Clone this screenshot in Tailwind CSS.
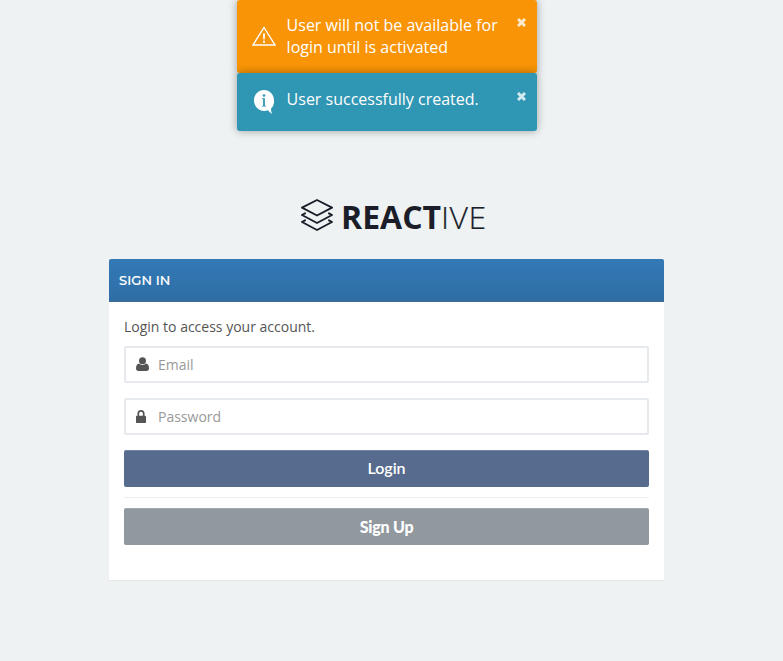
<!DOCTYPE html>
<html lang="en">
<head>
<meta charset="utf-8">
<title>Reactive - Sign in</title>
<script src="https://cdn.jsdelivr.net/npm/@tailwindcss/browser@4"></script>
</head>
<body class="bg-[#eef2f3] h-[661px] overflow-hidden font-['Open_Sans',sans-serif] text-[#555]">
<div class="absolute top-0 left-[237px] w-[300px] text-white text-base leading-[22px]">
  <div class="relative z-0 flex h-[73px] rounded-[3px] bg-[#f89406] shadow-[0_0_8px_rgba(0,0,0,0.35)] pl-[15px] pt-[14px]">
    <svg class="w-6 h-5 mt-3 shrink-0" viewBox="0 0 24 20" fill="none"><path d="M12 1.500 23 19H1Z" stroke="#fff" stroke-width="1.400"/><path d="M10.900 7.500h2.200l-.4 6h-1.400ZM11 14.700h2v2h-2Z" fill="#fff"/></svg>
    <p class="ml-[10.600px] w-[225px] whitespace-nowrap">User will not be available for<br>login until is activated</p>
    <svg class="absolute left-[280px] top-[18px] w-[9px] h-[9px]" viewBox="0 0 9 9"><path d="m1 1 7 7M8 1 1 8" stroke="#fde9cd" stroke-width="3"/></svg>
  </div>
  <div class="relative z-10 flex h-[58px] rounded-[3px] bg-[#2f96b4] shadow-[0_0_8px_rgba(0,0,0,0.35)] pl-[16px] pt-[15px]">
    <svg class="w-6 h-6 mt-[2px] shrink-0" viewBox="0 0 24 24"><path d="M11 0C5.400 0 1 4.500 1 10.300S5.400 21 11 21c1.500 0 2.800-.2 4-.8 1.200 1.500 2.400 2.800 4 3.600-.8-1.500-1-3.300-.9-5.300A10.300 10.300 0 0 0 21 10.300C21 4.500 16.600 0 11 0Z" fill="#fff"/><circle cx="11" cy="5.500" r="1.300" fill="#2f96b4"/><path d="M9 8.300h2.900v7.400h1.300v.8H8.800v-.8h1.300V9.100H9Z" fill="#2f96b4"/></svg>
    <p class="ml-[9.600px] whitespace-nowrap">User successfully created.</p>
    <svg class="absolute left-[280px] top-[19px] w-[9px] h-[9px]" viewBox="0 0 9 9"><path d="m1 1 7 7M8 1 1 8" stroke="#d5eaf0" stroke-width="3"/></svg>
  </div>
</div>
<main class="w-[555px] ml-[109px] pt-[195px]">
  <h1 class="flex h-[44px] ml-[192px] text-[#1b1e29] text-[32px] leading-[44px] whitespace-nowrap">
    <svg class="w-8 h-8 mt-1 mr-[8px] shrink-0" viewBox="0 0 32 32" fill="none" stroke="currentColor" stroke-width="1.900" stroke-linejoin="round" stroke-linecap="round"><path d="M16 1 31 8.700 16 16.500 1 8.700ZM4 14.300 1 16l15 8 15-8-3-1.700M4 21.300 1 23l15 8 15-8-3-1.700"/></svg>
    <span><b class="font-bold">REACT</b><span class="font-light tracking-[0.500px] [-webkit-text-stroke:0.200px_#1b1e29]">IVE</span></span>
  </h1>
  <section class="mt-5 h-[321px] rounded-t-[2px] bg-white shadow-[0_1px_1px_rgba(0,0,0,0.05)] overflow-hidden">
    <header class="h-[43px] bg-linear-to-b from-[#337ab7] to-[#2e6da4] border-b border-[#45698f] px-[10px] text-white text-[13px] leading-[43px] font-medium tracking-[0.100px] [-webkit-text-stroke:0.200px_#fff] font-[Montserrat,Inter,sans-serif]">SIGN IN</header>
    <form class="px-[15px] pt-[15px]">
      <p class="text-sm leading-5 mb-[9px]">Login to access your account.</p>
      <label class="flex items-center h-[37px] mb-[15px] border-2 border-[#e6e9ed] rounded-[2px] px-[10px]">
        <svg class="w-[13px] h-[14px] mr-[9px] shrink-0 -mt-px" viewBox="0 0 13 14" fill="#555"><circle cx="6.500" cy="3.700" r="3.500"/><path d="M3 6.500C1 6.800 0 8.700 0 11.300 0 13 1 14 2.500 14h8c1.500 0 2.500-1 2.500-2.700 0-2.600-1-4.500-3-4.800-.9.900-2 1.400-3.500 1.400S3.900 7.400 3 6.500Z"/></svg>
        <input class="w-full outline-none text-sm placeholder:text-[#999]" placeholder="Email">
      </label>
      <label class="flex items-center h-[37px] mb-[15px] border-2 border-[#e6e9ed] rounded-[2px] px-[10px]">
        <svg class="w-[10px] h-[13px] mr-3 shrink-0 -mt-px" viewBox="0 0 10 13"><path d="M2.300 6V3.600a2.700 2.700 0 0 1 5.400 0V6" fill="none" stroke="#555" stroke-width="1.700"/><rect y="5.700" width="10" height="7.300" rx=".8" fill="#555"/></svg>
        <input type="password" class="w-full outline-none text-sm placeholder:text-[#999]" placeholder="Password">
      </label>
      <button type="button" class="block w-full h-[37px] rounded-[2px] bg-[#566b8d] border-t border-[#7184a0] pb-[2px] text-white text-[16px] font-semibold font-[Lato,sans-serif]">Login</button>
      <hr class="my-[10px] border-[#eee]">
      <button type="button" class="block w-full h-[37px] rounded-[2px] bg-[#91999f] border-t border-[#a3aaae] text-white text-[16px] tracking-[-0.200px] font-black font-[Lato,sans-serif]">Sign Up</button>
    </form>
  </section>
</main>
</body>
</html>
